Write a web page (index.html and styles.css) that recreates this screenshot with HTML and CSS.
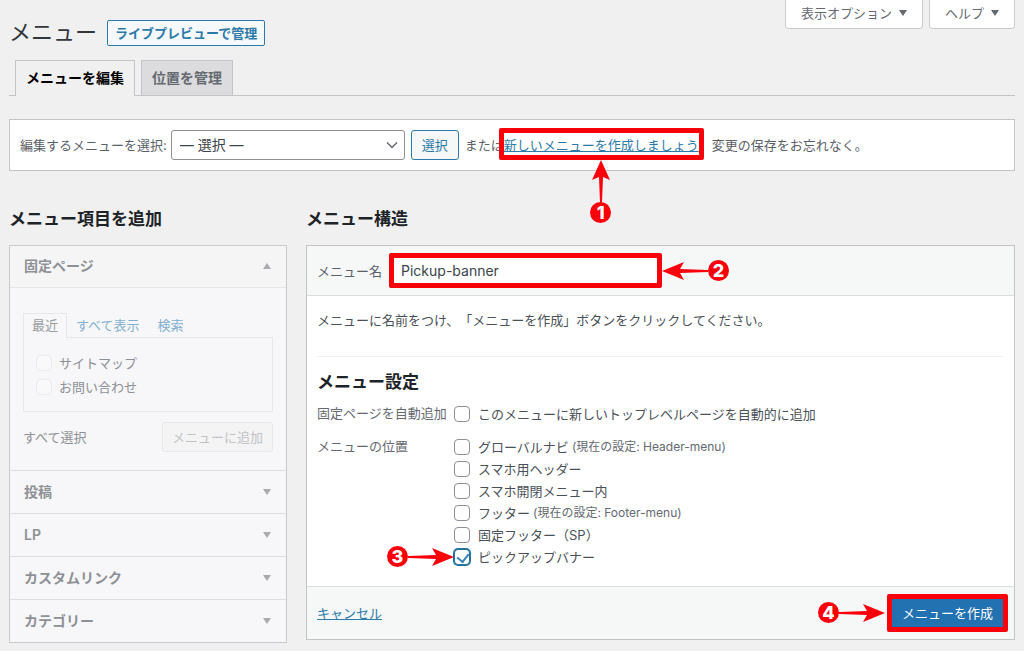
FILE: index.html
```html
<!DOCTYPE html>
<html lang="ja">
<head>
<meta charset="utf-8">
<title>メニュー</title>
<meta name="viewport" content="width=device-width, initial-scale=1">
<link rel="stylesheet" href="styles.css">
</head>
<body>
<svg class="defs" width="0" height="0" aria-hidden="true">
  <symbol id="arrow-right" viewBox="0 0 46 20" preserveAspectRatio="xMaxYMid meet">
    <path d="M0 9 L28 8 L24 1 L46 10 L24 19 L28 12 L0 11 Z"/>
  </symbol>
</svg>
<div class="page">
  <header class="page-head">
    <div class="title-row">
      <h1>メニュー</h1>
      <a class="title-action" href="#">ライブプレビューで管理</a>
    </div>
    <div class="screen-links">
      <button type="button">表示オプション <span class="tri down"></span></button>
      <button type="button">ヘルプ <span class="tri down"></span></button>
    </div>
  </header>

  <nav class="tabs">
    <a class="tab active" href="#">メニューを編集</a>
    <a class="tab" href="#">位置を管理</a>
  </nav>

  <form class="manage">
    <label for="menu-select">編集するメニューを選択:</label>
    <div class="select-wrap">
      <select id="menu-select"><option>— 選択 —</option></select>
      <svg class="chevron" viewBox="0 0 12 8" aria-hidden="true"><path d="M1 1.5l5 5 5-5"/></svg>
    </div>
    <button class="btn-outline" type="button">選択</button>
    <p>または<span class="marked mark-link"><a href="#">新しいメニューを作成しましょう</a><span class="callout up"><svg class="arrow" viewBox="0 0 20 42" aria-hidden="true"><path d="M9 42 L8 17 L1 20 L10 0 L19 20 L12 17 L11 42 Z"/></svg><span class="num">1</span></span></span>。変更の保存をお忘れなく。</p>
  </form>

  <main class="columns">
    <section class="side">
      <h2>メニュー項目を追加</h2>
      <div class="accordion">
        <h3 class="acc-head open">固定ページ <span class="tri up-tri"></span></h3>
        <div class="acc-body">
          <div class="mini-tabs">
            <a class="mini active" href="#">最近</a>
            <a class="mini" href="#">すべて表示</a>
            <a class="mini" href="#">検索</a>
          </div>
          <div class="mini-panel">
            <label><input type="checkbox" disabled>サイトマップ</label>
            <label><input type="checkbox" disabled>お問い合わせ</label>
          </div>
          <div class="acc-actions">
            <span>すべて選択</span>
            <button type="button" disabled>メニューに追加</button>
          </div>
        </div>
        <h3 class="acc-head">投稿 <span class="tri down"></span></h3>
        <h3 class="acc-head">LP <span class="tri down"></span></h3>
        <h3 class="acc-head">カスタムリンク <span class="tri down"></span></h3>
        <h3 class="acc-head">カテゴリー <span class="tri down"></span></h3>
      </div>
    </section>

    <section class="structure">
      <h2>メニュー構造</h2>
      <form class="editor">
        <div class="editor-head">
          <label for="menu-name">メニュー名</label>
          <div class="marked mark-name">
            <input id="menu-name" type="text" value="Pickup-banner">
            <span class="callout after"><svg class="arrow flip" aria-hidden="true"><use href="#arrow-right"/></svg><span class="num">2</span></span>
          </div>
        </div>
        <div class="editor-body">
          <p class="hint">メニューに名前をつけ、「メニューを作成」ボタンをクリックしてください。</p>
          <h3>メニュー設定</h3>
          <div class="setting">
            <span class="setting-name">固定ページを自動追加</span>
            <div class="checks">
              <label><input type="checkbox">このメニューに新しいトップレベルページを自動的に追加</label>
            </div>
          </div>
          <div class="setting">
            <span class="setting-name">メニューの位置</span>
            <div class="checks">
              <label><input type="checkbox">グローバルナビ <small>(現在の設定: Header-menu)</small></label>
              <label><input type="checkbox">スマホ用ヘッダー</label>
              <label><input type="checkbox">スマホ開閉メニュー内</label>
              <label><input type="checkbox">フッター <small>(現在の設定: Footer-menu)</small></label>
              <label><input type="checkbox">固定フッター（SP）</label>
              <label class="marked"><input type="checkbox" checked>ピックアップバナー<span class="callout before"><span class="num">3</span><svg class="arrow" aria-hidden="true"><use href="#arrow-right"/></svg></span></label>
            </div>
          </div>
        </div>
        <div class="editor-foot">
          <a href="#">キャンセル</a>
          <div class="marked mark-submit">
            <button type="button">メニューを作成</button>
            <span class="callout before"><span class="num">4</span><svg class="arrow" aria-hidden="true"><use href="#arrow-right"/></svg></span>
          </div>
        </div>
      </form>
    </section>
  </main>
</div>
</body>
</html>
```
FILE: styles.css
```css
* { box-sizing: border-box; }

body {
  margin: 0;
  background: #f0f0f1;
  color: #5a6067;
  font: 13px/20px Inter, "Noto Sans CJK JP", sans-serif;
  text-spacing-trim: space-all;
}

h1, h2, h3, p { margin: 0; }
button, input, select { font: inherit; color: inherit; margin: 0; }
a { color: #2c7aa8; }
.defs { position: absolute; }
.page { padding: 0 9px 9px; }

.tri {
  display: inline-block;
  border: 4px solid transparent;
}
.tri.down { border-top: 6px solid currentColor; border-bottom: 0; }
.tri.up-tri { border-bottom: 6px solid currentColor; border-top: 0; }

/* Page header */
.page-head {
  display: flex;
  justify-content: space-between;
  align-items: flex-start;
}
.title-row {
  display: flex;
  align-items: center;
  gap: 10px;
  padding-top: 17px;
}
h1 {
  color: #32373c;
  font-size: 22px;
  font-weight: 400;
  line-height: 31px;
}
.title-action {
  padding: 2px 7px;
  border: 1px solid #2c7aa8;
  border-radius: 2px;
  background: #f6f9fb;
  font-weight: 700;
  line-height: 20px;
  text-decoration: none;
}
.screen-links { display: flex; gap: 6px; }
.screen-links button {
  display: flex;
  align-items: center;
  gap: 7px;
  height: 29px;
  padding: 0 15px 2px;
  border: 1px solid #c9cbce;
  border-top: 0;
  border-radius: 0 0 4px 4px;
  background: #fff;
  color: #646970;
}

.tabs {
  display: flex;
  gap: 6px;
  margin-top: 12px;
  padding-left: 6px;
  border-bottom: 1px solid #c3c4c7;
}
.tab {
  padding: 5px 10px;
  border: 1px solid #c3c4c7;
  border-bottom: 0;
  background: #dcdcde;
  color: #646970;
  font-size: 14px;
  font-weight: 700;
  line-height: 24px;
  text-decoration: none;
}
.tab.active {
  margin-bottom: -1px;
  background: #f0f0f1;
  color: #000;
}

/* Menu picker */
.manage {
  display: flex;
  align-items: center;
  gap: 4px;
  margin-top: 23px;
  padding: 10px;
  border: 1px solid #c3c4c7;
  background: #fff;
}
.manage p { white-space: nowrap; }
.select-wrap { position: relative; flex: 0 1 234px; }
.select-wrap select {
  width: 100%;
  height: 30px;
  padding: 0 24px 0 8px;
  border: 1px solid #8c8f94;
  border-radius: 3px;
  appearance: none;
  background: #fff;
  color: #3c434a;
  font-size: 14px;
}
.chevron {
  position: absolute;
  top: 11px;
  right: 7px;
  width: 12px;
  height: 8px;
  fill: none;
  stroke: #646970;
  stroke-width: 1.5;
}
.btn-outline {
  height: 30px;
  padding: 0 10px;
  margin: 0 2px;
  border: 1px solid #2c7aa8;
  border-radius: 3px;
  background: #f6f7f7;
  color: #2c7aa8;
}

/* Two-column area */
.columns {
  display: grid;
  grid-template-columns: 278px 1fr;
  align-items: start;
  gap: 19px;
  margin-top: 36px;
}
h2 {
  margin-bottom: 14px;
  color: #1d2327;
  font-size: 17px;
  font-weight: 700;
  line-height: 24px;
}

.accordion {
  border: 1px solid #c9cacd;
  background: #f7f7f9;
  color: #8d9095;
}
.acc-head {
  display: flex;
  justify-content: space-between;
  align-items: center;
  padding: 11px 15px 11px 14px;
  font-size: 14px;
  font-weight: 600;
  line-height: 20px;
}
.acc-head + .acc-head, .acc-body + .acc-head { border-top: 1px solid #dddee0; }
.acc-head.open { padding-top: 10px; background: #f5f5f5; border-bottom: 1px solid #e6e6e8; }
.acc-head .tri { color: #a9abae; }
.acc-body { padding: 25px 13px 18px; }
.mini-tabs { display: flex; }
.mini {
  padding: 1px 8px 2px;
  border: 1px solid transparent;
  border-bottom: 0;
  color: #82b0d0;
  text-decoration: none;
}
.mini.active {
  position: relative;
  z-index: 1;
  margin-bottom: -1px;
  padding-bottom: 3px;
  border-color: #e8e8ea;
  background: #f7f7f9;
  color: #999ca0;
}
.mini-panel {
  display: flex;
  flex-direction: column;
  gap: 4px;
  padding: 15px 12px 14px;
  border: 1px solid #e8e8ea;
}
.mini-panel label { display: flex; align-items: center; gap: 7px; }
.acc-actions {
  display: flex;
  justify-content: space-between;
  align-items: center;
  margin-top: 10px;
}
.acc-actions button {
  height: 30px;
  padding: 0 9px;
  border: 1px solid #e8e8ea;
  border-radius: 3px;
  background: #f4f4f5;
  color: #c0c2c5;
}

input[type="checkbox"] {
  position: relative;
  flex: none;
  width: 16px;
  height: 16px;
  border: 1px solid #8c8f94;
  border-radius: 4px;
  appearance: none;
  background: #fff;
}
input[type="checkbox"]:disabled { border-color: #ececee; background: #f9f9fa; }
input[type="checkbox"]:checked {
  border-color: #2271a1;
  box-shadow: 0 0 0 1px #2271a1;
}
input[type="checkbox"]:checked::before {
  content: "";
  position: absolute;
  top: 1px;
  left: 4px;
  width: 6px;
  height: 9px;
  border: solid #3582b4;
  border-width: 0 2px 2px 0;
  transform: rotate(38deg);
}

/* Menu editor */
.editor { border: 1px solid #c3c4c7; background: #fff; }
.editor-head {
  display: flex;
  align-items: center;
  gap: 11px;
  padding: 10px;
  border-bottom: 1px solid #dcdcde;
  background: #f6f7f7;
}
.mark-name { flex: 0 1 265px; }
.mark-name input {
  width: 100%;
  height: 29px;
  padding: 0 7px;
  border: 1px solid #8c8f94;
  border-radius: 3px;
  background: #fff;
  color: #3c434a;
  font-size: 14px;
  outline: none;
}
.editor-body { padding: 14px 10px 7px; color: #4a5057; }
.hint { padding-bottom: 26px; border-bottom: 1px solid #f0f0f1; }
.editor-body h3 {
  margin: 13px 0 9px;
  color: #1d2327;
  font-size: 17px;
  font-weight: 700;
  line-height: 24px;
}
.setting {
  display: grid;
  grid-template-columns: 130px 1fr;
  gap: 7px;
  margin-bottom: 12px;
}
.setting-name { color: #646970; white-space: nowrap; }
.checks { display: grid; gap: 1px; line-height: 22px; }
.checks label {
  display: flex;
  align-items: center;
  justify-self: start;
  height: 21px;
}
.checks input { margin-right: 8px; }
.checks small { margin-left: 3px; color: #646970; font-size: 12px; }

.editor-foot {
  display: flex;
  justify-content: space-between;
  align-items: center;
  padding: 10px;
  border-top: 1px solid #dcdcde;
  background: #f6f7f7;
}
.mark-submit button {
  display: block;
  height: 32px;
  padding: 0 11px;
  border: 0;
  background: #2271b1;
  color: #fff;
}

/* Numbered callouts */
.marked { position: relative; }
.mark-link::after, .mark-name::after, .mark-submit::after {
  content: "";
  position: absolute;
  inset: -3px -4px;
  border: 5px solid #f9000a;
  border-radius: 2px;
  pointer-events: none;
}
.mark-link::after { inset: -9px -5px -7px; }
.callout {
  position: absolute;
  z-index: 2;
  display: flex;
  align-items: center;
}
.callout.up { top: 23px; left: 50%; flex-direction: column; margin-left: -11px; }
.callout.after { top: 4px; left: 100%; margin-left: 4px; }
.callout.before { top: 0; right: 100%; }
.mark-submit .callout.before { top: 5px; margin-right: 6px; }
.arrow { width: 46px; height: 20px; fill: #f9000a; }
.arrow.flip { transform: scaleX(-1); }
.callout.up .arrow { width: 20px; height: 42px; }
.num {
  width: 21px;
  height: 21px;
  border-radius: 50%;
  background: #f9000a;
  color: #fff;
  font-size: 18px;
  font-weight: 800;
  line-height: 21px;
  text-align: center;
}
```
